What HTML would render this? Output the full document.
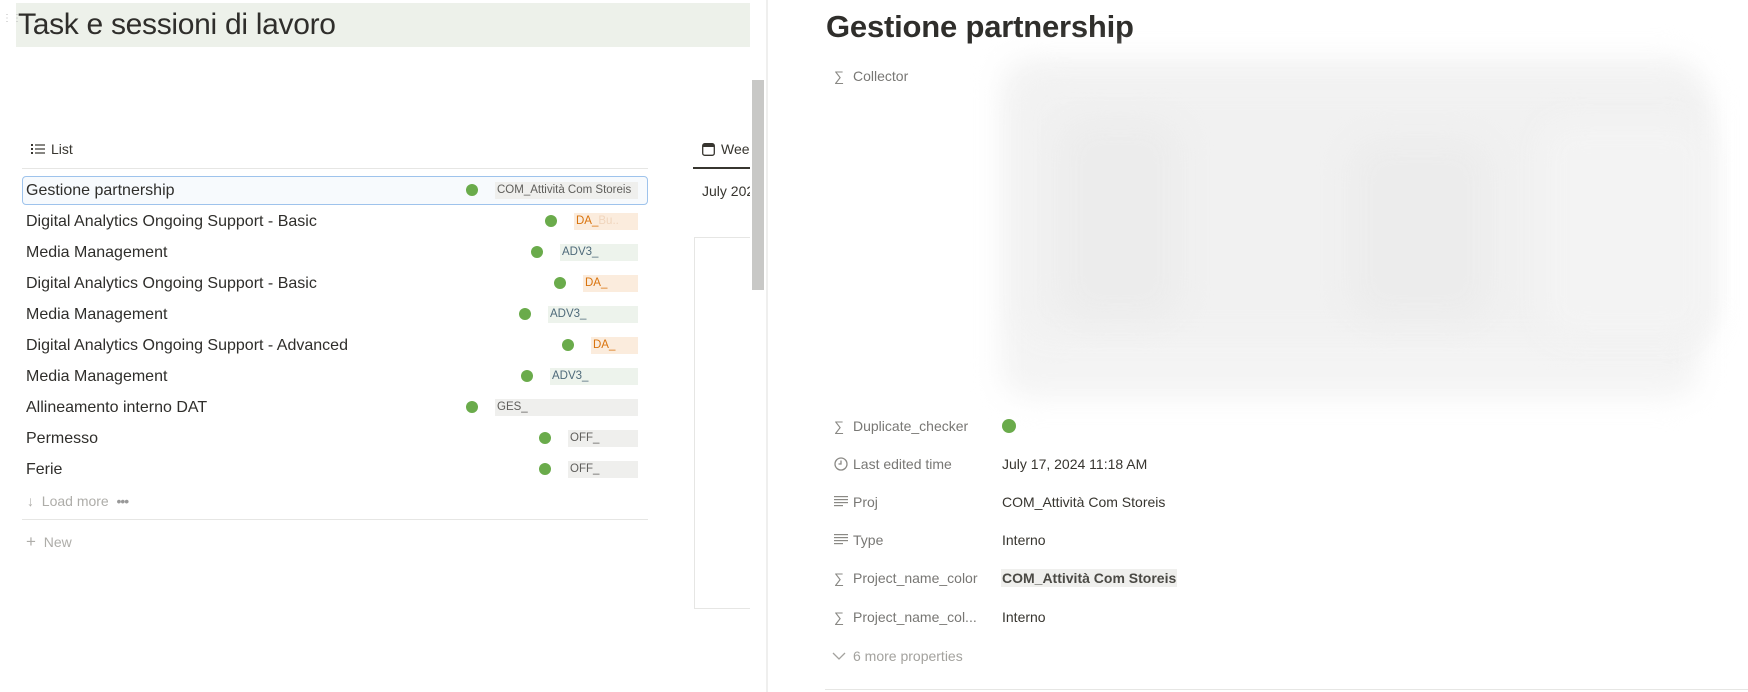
<!DOCTYPE html>
<html><head><meta charset="utf-8"><style>
*{margin:0;padding:0;box-sizing:border-box}
body{width:1748px;height:692px;overflow:hidden;background:#fff;font-family:"Liberation Sans",sans-serif;color:#37352f;position:relative}
.a{position:absolute;white-space:nowrap}
.row{position:absolute;left:26px;font-size:16px;color:#2f2e2b}
.dot{position:absolute;width:12px;height:12px;border-radius:50%;background:#6aab4b}
.tag{position:absolute;height:17px;font-size:11.5px;line-height:17px;padding:0 2px;overflow:hidden}
.g{background:#efefed;color:#5f5e5b}
.o{background:#fbecdd;color:#d9730d}
.gr{background:#edf3ec;color:#4e6a7a}
.lbl{position:absolute;left:853px;font-size:14px;color:#787774}
.ic{position:absolute;left:834px;font-size:14px;color:#8a8985}
.val{position:absolute;left:1002px;font-size:14px;color:#37352f}
.blob{position:absolute;filter:blur(14px);border-radius:30px}
</style></head><body>
<div class="a" style="left:16px;top:3px;width:734px;height:44px;background:#edf1ea"></div>
<div class="a" style="left:2px;top:16px;font-size:10px;color:#bbb;line-height:6px">⋮⋮</div>
<div class="a" style="left:18px;top:8px;font-size:30px;color:#2f2e2b;letter-spacing:-0.3px">Task e sessioni di lavoro</div>
<div class="a" style="left:31px;top:141px;font-size:14px;color:#37352f"><svg width="14" height="12" style="vertical-align:-1px;margin-right:6px"><g fill="#37352f"><rect x="0" y="1" width="2" height="2"/><rect x="0" y="5" width="2" height="2"/><rect x="0" y="9" width="2" height="2"/><rect x="4" y="1.4" width="10" height="1.2"/><rect x="4" y="5.4" width="10" height="1.2"/><rect x="4" y="9.4" width="10" height="1.2"/></g></svg>List</div>
<div class="a" style="left:22px;top:168px;width:626px;height:1px;background:#e6e6e4"></div>
<div class="a" style="left:22px;top:176px;width:626px;height:29px;border:1.5px solid #9ec3ec;border-radius:4px;background:#f7fafd"></div>
<div class="row" style="top:182px">Gestione partnership</div>
<div class="row" style="top:213px">Digital Analytics Ongoing Support - Basic</div>
<div class="row" style="top:244px">Media Management</div>
<div class="row" style="top:275px">Digital Analytics Ongoing Support - Basic</div>
<div class="row" style="top:306px">Media Management</div>
<div class="row" style="top:337px">Digital Analytics Ongoing Support - Advanced</div>
<div class="row" style="top:368px">Media Management</div>
<div class="row" style="top:399px">Allineamento interno DAT</div>
<div class="row" style="top:430px">Permesso</div>
<div class="row" style="top:461px">Ferie</div>

<div class="dot" style="left:466px;top:184px"></div><div class="tag g" style="left:495px;top:182px;width:143px">COM_Attività Com Storeis</div>
<div class="dot" style="left:545px;top:215px"></div><div class="tag o" style="left:574px;top:213px;width:64px">DA_<span style="color:#f0d5bd">Bu..</span></div>
<div class="dot" style="left:531px;top:246px"></div><div class="tag gr" style="left:560px;top:244px;width:78px">ADV3_</div>
<div class="dot" style="left:554px;top:277px"></div><div class="tag o" style="left:583px;top:275px;width:55px">DA_</div>
<div class="dot" style="left:519px;top:308px"></div><div class="tag gr" style="left:548px;top:306px;width:90px">ADV3_</div>
<div class="dot" style="left:562px;top:339px"></div><div class="tag o" style="left:591px;top:337px;width:47px">DA_</div>
<div class="dot" style="left:521px;top:370px"></div><div class="tag gr" style="left:550px;top:368px;width:88px">ADV3_</div>
<div class="dot" style="left:466px;top:401px"></div><div class="tag g" style="left:495px;top:399px;width:143px">GES_</div>
<div class="dot" style="left:539px;top:432px"></div><div class="tag g" style="left:568px;top:430px;width:70px">OFF_</div>
<div class="dot" style="left:539px;top:463px"></div><div class="tag g" style="left:568px;top:461px;width:70px">OFF_</div>

<div class="a" style="left:27px;top:493px;font-size:14px;color:#aeada9">↓&nbsp; Load more &nbsp;<span style="letter-spacing:-1px;color:#999">•••</span></div>
<div class="a" style="left:22px;top:519px;width:626px;height:1px;background:#e6e6e4"></div>
<div class="a" style="left:26px;top:532px;font-size:14px;color:#aeada9"><span style="font-size:17px">+</span>&nbsp; New</div>

<div class="a" style="left:702px;top:141px;font-size:14px;color:#37352f"><svg width="13" height="13" style="vertical-align:-2px;margin-right:6px"><rect x="0.7" y="0.7" width="11.6" height="11.6" rx="2" fill="none" stroke="#37352f" stroke-width="1.3"/><rect x="1" y="1" width="11" height="3" fill="#37352f"/></svg>Week</div>
<div class="a" style="left:693px;top:167px;width:57px;height:2px;background:#37352f"></div>
<div class="a" style="left:702px;top:183px;font-size:14px;color:#37352f">July 2024</div>
<div class="a" style="left:694px;top:237px;width:60px;height:372px;border:1px solid #e6e6e4"></div>

<div class="a" style="left:750px;top:0;width:18px;height:692px;background:#fff"></div>
<div class="a" style="left:752px;top:80px;width:12px;height:210px;background:#c8c8c6"></div>
<div class="a" style="left:766px;top:0;width:2px;height:692px;background:#efefee"></div>

<div class="a" style="left:768px;top:0;width:980px;height:692px;background:#fff"></div>
<div class="a" style="left:826px;top:9px;font-size:31px;font-weight:bold;color:#2f2e2b;letter-spacing:-0.2px">Gestione partnership</div>

<div class="blob" style="left:1000px;top:58px;width:700px;height:340px;background:#f4f4f4"></div>
<div class="blob" style="left:1020px;top:80px;width:690px;height:260px;background:#f1f1f1"></div>
<div class="blob" style="left:1060px;top:120px;width:120px;height:200px;background:#ececec"></div>
<div class="blob" style="left:1350px;top:140px;width:140px;height:180px;background:#ececec"></div>
<div class="blob" style="left:1540px;top:120px;width:170px;height:220px;background:#f3f3f3"></div>

<div class="ic" style="top:68px">∑</div><div class="lbl" style="top:68px">Collector</div>
<div class="ic" style="top:418px">∑</div><div class="lbl" style="top:418px">Duplicate_checker</div>
<div class="dot" style="left:1002px;top:419px;width:14px;height:14px"></div>
<div class="ic" style="top:456px"><svg width="14" height="14" style="vertical-align:-2px"><circle cx="7" cy="7" r="6" fill="none" stroke="#8a8985" stroke-width="1.3"/><path d="M7 3.5V7H4.5" fill="none" stroke="#8a8985" stroke-width="1.3"/></svg></div><div class="lbl" style="top:456px">Last edited time</div><div class="val" style="top:456px">July 17, 2024 11:18 AM</div>
<div class="ic" style="top:494px"><svg width="14" height="12"><g fill="#8a8985"><rect y="1" width="14" height="1.2"/><rect y="4" width="14" height="1.2"/><rect y="7" width="14" height="1.2"/><rect y="10" width="9" height="1.2"/></g></svg></div><div class="lbl" style="top:494px">Proj</div><div class="val" style="top:494px">COM_Attività Com Storeis</div>
<div class="ic" style="top:532px"><svg width="14" height="12"><g fill="#8a8985"><rect y="1" width="14" height="1.2"/><rect y="4" width="14" height="1.2"/><rect y="7" width="14" height="1.2"/><rect y="10" width="9" height="1.2"/></g></svg></div><div class="lbl" style="top:532px">Type</div><div class="val" style="top:532px">Interno</div>
<div class="ic" style="top:570px">∑</div><div class="lbl" style="top:570px">Project_name_color</div><div class="val" style="top:569px;background:#efefed;padding:1px 1px;left:1001px;font-weight:bold;color:#4a4944">COM_Attività Com Storeis</div>
<div class="ic" style="top:609px">∑</div><div class="lbl" style="top:609px">Project_name_col...</div><div class="val" style="top:609px">Interno</div>
<div class="a" style="left:832px;top:648px;font-size:14px;color:#a3a29e"><svg width="14" height="10" style="margin-right:7px"><path d="M1 2l6 6 6-6" fill="none" stroke="#a3a29e" stroke-width="1.3"/></svg>6 more properties</div>
<div class="a" style="left:825px;top:689px;width:923px;height:1px;background:#e6e6e4"></div>
</body></html>
